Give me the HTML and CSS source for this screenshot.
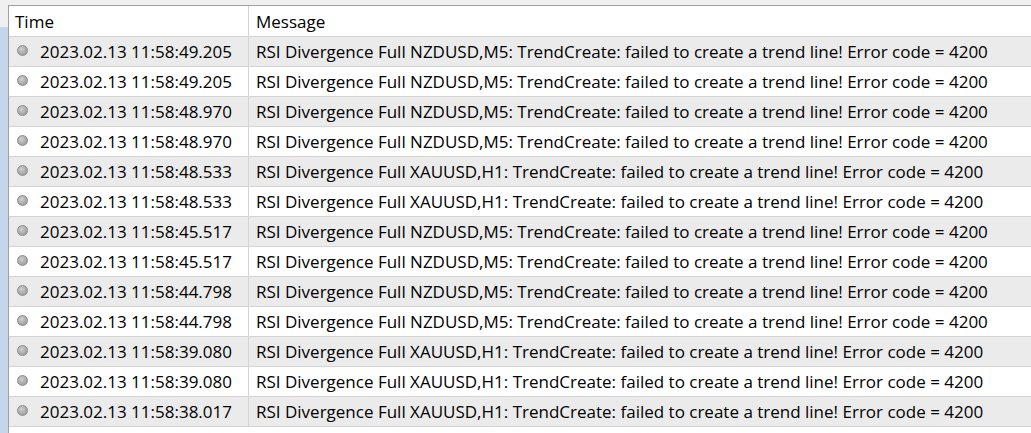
FILE: index.html
```html
<!DOCTYPE html>
<html>
<head>
<meta charset="utf-8">
<link rel="stylesheet" href="styles.css">
</head>
<body>
<div class="app">
  <div class="side"><div class="side-blue"></div></div>
  <div class="panel">
    <div class="grid">
      <div class="cell head c1">Time</div>
      <div class="cell head c2">Message</div>

      <div class="cell c1 odd"><span class="dot"></span>2023.02.13 11:58:49.205</div>
      <div class="cell c2 odd">RSI Divergence Full NZDUSD,M5: TrendCreate: failed to create a trend line! Error code = 4200</div>
      <div class="cell c1"><span class="dot"></span>2023.02.13 11:58:49.205</div>
      <div class="cell c2">RSI Divergence Full NZDUSD,M5: TrendCreate: failed to create a trend line! Error code = 4200</div>
      <div class="cell c1 odd"><span class="dot"></span>2023.02.13 11:58:48.970</div>
      <div class="cell c2 odd">RSI Divergence Full NZDUSD,M5: TrendCreate: failed to create a trend line! Error code = 4200</div>
      <div class="cell c1"><span class="dot"></span>2023.02.13 11:58:48.970</div>
      <div class="cell c2">RSI Divergence Full NZDUSD,M5: TrendCreate: failed to create a trend line! Error code = 4200</div>
      <div class="cell c1 odd"><span class="dot"></span>2023.02.13 11:58:48.533</div>
      <div class="cell c2 odd">RSI Divergence Full XAUUSD,H1: TrendCreate: failed to create a trend line! Error code = 4200</div>
      <div class="cell c1"><span class="dot"></span>2023.02.13 11:58:48.533</div>
      <div class="cell c2">RSI Divergence Full XAUUSD,H1: TrendCreate: failed to create a trend line! Error code = 4200</div>
      <div class="cell c1 odd"><span class="dot"></span>2023.02.13 11:58:45.517</div>
      <div class="cell c2 odd">RSI Divergence Full NZDUSD,M5: TrendCreate: failed to create a trend line! Error code = 4200</div>
      <div class="cell c1"><span class="dot"></span>2023.02.13 11:58:45.517</div>
      <div class="cell c2">RSI Divergence Full NZDUSD,M5: TrendCreate: failed to create a trend line! Error code = 4200</div>
      <div class="cell c1 odd"><span class="dot"></span>2023.02.13 11:58:44.798</div>
      <div class="cell c2 odd">RSI Divergence Full NZDUSD,M5: TrendCreate: failed to create a trend line! Error code = 4200</div>
      <div class="cell c1"><span class="dot"></span>2023.02.13 11:58:44.798</div>
      <div class="cell c2">RSI Divergence Full NZDUSD,M5: TrendCreate: failed to create a trend line! Error code = 4200</div>
      <div class="cell c1 odd"><span class="dot"></span>2023.02.13 11:58:39.080</div>
      <div class="cell c2 odd">RSI Divergence Full XAUUSD,H1: TrendCreate: failed to create a trend line! Error code = 4200</div>
      <div class="cell c1"><span class="dot"></span>2023.02.13 11:58:39.080</div>
      <div class="cell c2">RSI Divergence Full XAUUSD,H1: TrendCreate: failed to create a trend line! Error code = 4200</div>
      <div class="cell c1 odd"><span class="dot"></span>2023.02.13 11:58:38.017</div>
      <div class="cell c2 odd">RSI Divergence Full XAUUSD,H1: TrendCreate: failed to create a trend line! Error code = 4200</div>
    </div>
  </div>
</div>
</body>
</html>
```

FILE: styles.css
```css
html, body {
  margin: 0;
  padding: 0;
  background: #f0f0f0;
  height: 100%;
  overflow: hidden;
}
.app {
  display: flex;
  height: 433px;
  font-family: "Open Sans", "Noto Sans", sans-serif;
  font-size: 17px;
  color: #000;
}
.side {
  width: 8px;
  flex: none;
  padding-top: 27px;
  box-sizing: border-box;
  display: flex;
}
.side-blue {
  flex: 1;
  background: #c3d6ec;
}
.panel {
  flex: 1;
  margin-top: 5px;
  background: #fff;
  border-top: 1px solid #a0a0a0;
  border-left: 1px solid #a0a0a0;
}
.grid {
  display: grid;
  grid-template-columns: 240px 1fr;
}
.cell {
  height: 29px;
  border-bottom: 1px solid #d4d4d4;
  display: flex;
  align-items: center;
  white-space: nowrap;
  overflow: hidden;
}
.head {
  height: 30px;
  background: #fff;
}
.c1 {
  border-right: 1px solid #d4d4d4;
  padding-left: 6px;
}
.c1:not(.head) {
  padding-left: 8px;
}
.c2 {
  padding-left: 7px;
}
.odd {
  background: #ebebeb;
}
.dot {
  width: 11px;
  height: 11px;
  border-radius: 50%;
  box-sizing: border-box;
  border: 1px solid #8c8c8c;
  background: radial-gradient(circle at 40% 35%, #d0d0d0 0%, #a8a8a8 60%, #969696 100%);
  margin-right: 12px;
  margin-top: -3px;
  flex: none;
}
```
